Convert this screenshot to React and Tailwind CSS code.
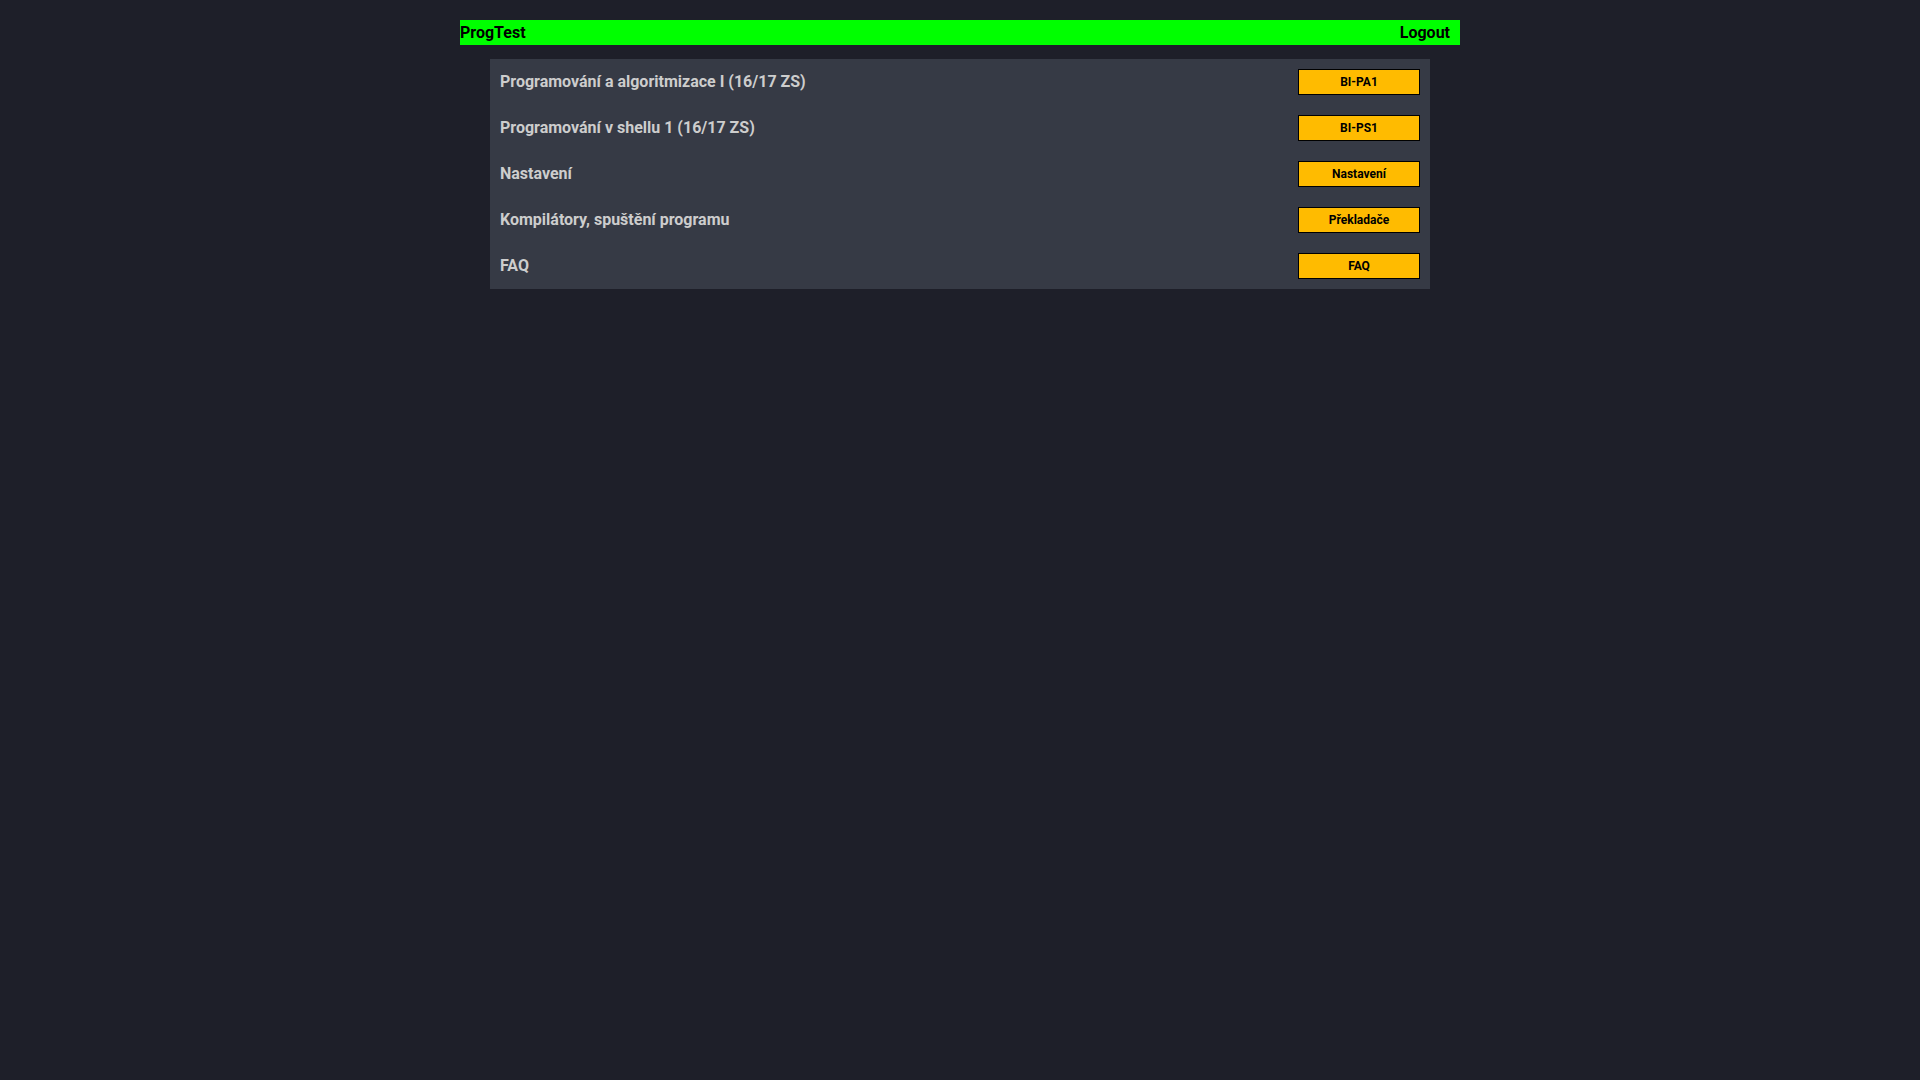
import React from 'react';

const rows = [
  { title: 'Programování a algoritmizace I (16/17 ZS)', button: 'BI-PA1' },
  { title: 'Programování v shellu 1 (16/17 ZS)', button: 'BI-PS1' },
  { title: 'Nastavení', button: 'Nastavení' },
  { title: 'Kompilátory, spuštění programu', button: 'Překladače' },
  { title: 'FAQ', button: 'FAQ' }
];

const App = () => {
  return (
    <div className="min-h-screen bg-[#1e1f29] font-['Roboto','Liberation_Sans',sans-serif]">
      <div className="w-[1000px] mx-auto pt-5">
        <div className="h-[25px] bg-[#00ff00] flex items-center justify-between pr-[10px] text-black font-bold text-base">
          <span>ProgTest</span>
          <span>Logout</span>
        </div>

        <div className="w-[940px] mx-auto mt-[14px] bg-[#363a45]">
          {rows.map((row) => (
            <div key={row.button} className="h-[46px] flex items-center justify-between pl-[10px] pr-[10px]">
              <span className="text-base font-bold text-[#cdcdcd]">{row.title}</span>
              <button className="w-[122px] h-[26px] bg-[#ffbb00] border border-black text-black text-xs font-bold">
                {row.button}
              </button>
            </div>
          ))}
        </div>
      </div>
    </div>
  );
};

export default App;
